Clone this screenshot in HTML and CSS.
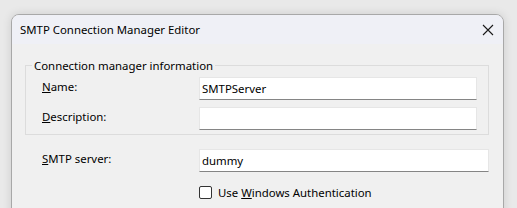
FILE: index.html
```html
<!DOCTYPE html>
<html>
<head>
<meta charset="utf-8">
<link rel="stylesheet" href="styles.css">
</head>
<body>
<div class="window">
  <div class="titlebar">
    <span class="title">SMTP Connection Manager Editor</span>
    <svg class="close" width="12" height="12" viewBox="0 0 12 12"><path d="M1 1 L11 11 M11 1 L1 11" stroke="#1a1a1a" stroke-width="1.1" fill="none"/></svg>
  </div>
  <div class="content">
    <fieldset class="group">
      <legend>Connection manager information</legend>
      <div class="row">
        <label class="lbl"><u>N</u>ame:</label>
        <div class="input">SMTPServer</div>
      </div>
      <div class="row row2">
        <label class="lbl"><u>D</u>escription:</label>
        <div class="input"></div>
      </div>
    </fieldset>
    <div class="row outer">
      <label class="lbl"><u>S</u>MTP server:</label>
      <div class="input wide">dummy</div>
    </div>
    <div class="check">
      <span class="box"></span>
      <span>Use <u>W</u>indows Authentication</span>
    </div>
  </div>
</div>
</body>
</html>
```
FILE: styles.css
```css
html, body {
  margin: 0;
  padding: 0;
}
body {
  width: 517px;
  height: 208px;
  overflow: hidden;
  background: #e9e9e9;
  font-family: "Noto Sans", sans-serif;
  font-size: 11.4px;
  color: #000;
}
.window {
  margin: 14px 0 0 11px;
  width: 491px;
  height: 240px;
  border: 1px solid #a8a8a8;
  border-radius: 8px 8px 0 0;
  background: #f0f0f0;
  box-shadow: 0 0 10px rgba(0,0,0,0.12);
  overflow: hidden;
}
.titlebar {
  height: 29px;
  background: #eff0f6;
  display: flex;
  align-items: center;
  justify-content: space-between;
  padding: 0 9px 0 8px;
}
.title {
  font-size: 11.4px;
  padding-bottom: 1px;
}
.content {
  padding: 14px 14px 0 13px;
}
.group {
  margin: 0;
  border: 1px solid #dcdcdc;
  padding: 4px 0 4px 16px;
  min-width: 0;
}
.group legend {
  padding: 0 2px;
  margin-left: -10px;
  font-size: 11.4px;
}
.row {
  display: flex;
  align-items: flex-start;
}
.row2 {
  margin-top: 7px;
}
.lbl {
  width: 157px;
  padding-top: 2px;
  line-height: 16px;
}
.input {
  box-sizing: border-box;
  width: 278px;
  height: 23px;
  background: #fff;
  border: 1px solid #e6e6e6;
  border-bottom: 1px solid #858585;
  padding: 2px 3px 0 2px;
  line-height: 17px;
}
.outer {
  margin-top: 14px;
  padding-left: 17px;
}
.wide {
  width: 290px;
}
.check {
  display: flex;
  align-items: center;
  margin: 13px 0 0 174px;
  gap: 6px;
}
.box {
  box-sizing: border-box;
  width: 13px;
  height: 13px;
  border: 1px solid #333;
  border-radius: 2px;
  background: #fff;
}
```
